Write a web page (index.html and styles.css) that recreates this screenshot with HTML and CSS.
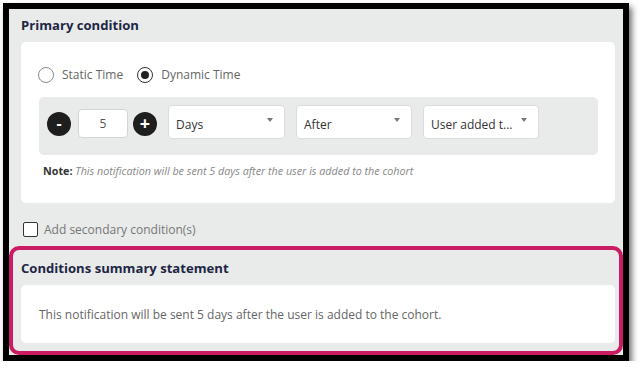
FILE: index.html
```html
<!DOCTYPE html>
<html>
<head>
<meta charset="utf-8">
<link rel="stylesheet" href="styles.css">
</head>
<body>
<div class="frame">
  <div class="primary">
    <h2 class="title">Primary condition</h2>
    <div class="card">
      <div class="radios">
        <label class="radio"><span class="circle"></span>Static Time</label>
        <label class="radio"><span class="circle checked"></span>Dynamic Time</label>
      </div>
      <div class="panel">
        <span class="round-btn">-</span>
        <span class="num">5</span>
        <span class="round-btn plus">+</span>
        <div class="select w-days"><span>Days</span><i class="caret"></i></div>
        <div class="select"><span>After</span><i class="caret"></i></div>
        <div class="select"><span>User added t...</span><i class="caret"></i></div>
      </div>
      <p class="note"><b>Note:</b> <em>This notification will be sent 5 days after the user is added to the cohort</em></p>
    </div>
    <label class="check"><span class="box"></span>Add secondary condition(s)</label>
  </div>
  <div class="summary">
    <h2 class="title">Conditions summary statement</h2>
    <div class="summary-card">This notification will be sent 5 days after the user is added to the cohort.</div>
  </div>
</div>
</body>
</html>
```

FILE: styles.css
```css
* { box-sizing: border-box; }
body {
  margin: 0;
  background: #fff;
  font-family: "Open Sans", "Liberation Sans", sans-serif;
}
.frame {
  margin: 3px 0 0 3px;
  width: 626px;
  height: 358px;
  border: 6px solid #000;
  background: #e9eaea;
  box-shadow: 3px 4px 6px rgba(0,0,0,0.55);
  display: flex;
  flex-direction: column;
}
.primary {
  padding: 7px 8px 0 12px;
}
.title {
  margin: 0;
  font-size: 13.1px;
  line-height: 18px;
  font-weight: 700;
  color: #1d2744;
}
.card {
  margin-top: 8px;
  background: #fff;
  border-radius: 5px;
  height: 161px;
  padding: 25px 17px 0 17px;
}
.radios {
  display: flex;
  align-items: center;
  height: 16px;
  gap: 14px;
}
.radio {
  display: flex;
  align-items: center;
  font-size: 12px;
  color: #666;
  line-height: 16px;
}
.circle {
  width: 16px;
  height: 16px;
  border-radius: 50%;
  border: 1px solid #8a8a8a;
  margin-right: 8px;
  display: flex;
  align-items: center;
  justify-content: center;
  background: #fff;
}
.circle.checked {
  border: 1.5px solid #333;
}
.circle.checked::after {
  content: "";
  width: 8px;
  height: 8px;
  border-radius: 50%;
  background: #222;
}
.panel {
  margin: 14px 0 0 1px;
  height: 58px;
  background: #e9eaea;
  border-radius: 5px;
  display: flex;
  align-items: flex-start;
  padding: 8px 8px 0 8px;
}
.round-btn {
  margin-top: 7px;
  width: 24px;
  height: 24px;
  border-radius: 50%;
  background: #1e1e1e;
  color: #fff;
  font-weight: 700;
  font-size: 16px;
  line-height: 22px;
  text-align: center;
}
.round-btn.plus {
  margin-left: 5px;
  font-size: 18px;
}
.num {
  margin: 4px 0 0 7px;
  width: 50px;
  height: 29px;
  background: #fff;
  border: 1px solid #d4d4d4;
  border-radius: 4px;
  font-size: 12px;
  color: #555;
  text-align: center;
  line-height: 27px;
}
.select {
  position: relative;
  margin-left: 11px;
  width: 116px;
  height: 34px;
  background: #fff;
  border: 1px solid #dcdcdc;
  border-radius: 4px;
  display: flex;
  align-items: flex-end;
  padding: 0 0 5px 7px;
  font-size: 12px;
  line-height: 16px;
  color: #333;
}
.select.w-days { width: 117px; }
.caret {
  position: absolute;
  right: 11px;
  top: 12px;
  width: 0;
  height: 0;
  border-left: 3.5px solid transparent;
  border-right: 3.5px solid transparent;
  border-top: 4px solid #777;
}
.note {
  margin: 9px 0 0 5px;
  font-size: 10.75px;
  line-height: 14px;
  color: #888;
}
.note b { color: #333; font-weight: 700; }
.note em { font-style: italic; }
.check {
  display: flex;
  align-items: center;
  margin: 19px 0 9px 2px;
  height: 15px;
  font-size: 12px;
  color: #777;
}
.box {
  width: 15px;
  height: 15px;
  border: 1.5px solid #333;
  border-radius: 2px;
  background: #fff;
  margin-right: 6px;
}
.summary {
  flex: 1;
  border: 4px solid #c91c63;
  border-radius: 10px;
  padding: 9px 4px 8px 8px;
  display: flex;
  flex-direction: column;
}
.summary-card {
  margin-top: 8px;
  flex: 1;
  background: #fff;
  border-radius: 5px;
  padding-left: 18px;
  display: flex;
  align-items: center;
  font-size: 12px;
  color: #666;
}
```
